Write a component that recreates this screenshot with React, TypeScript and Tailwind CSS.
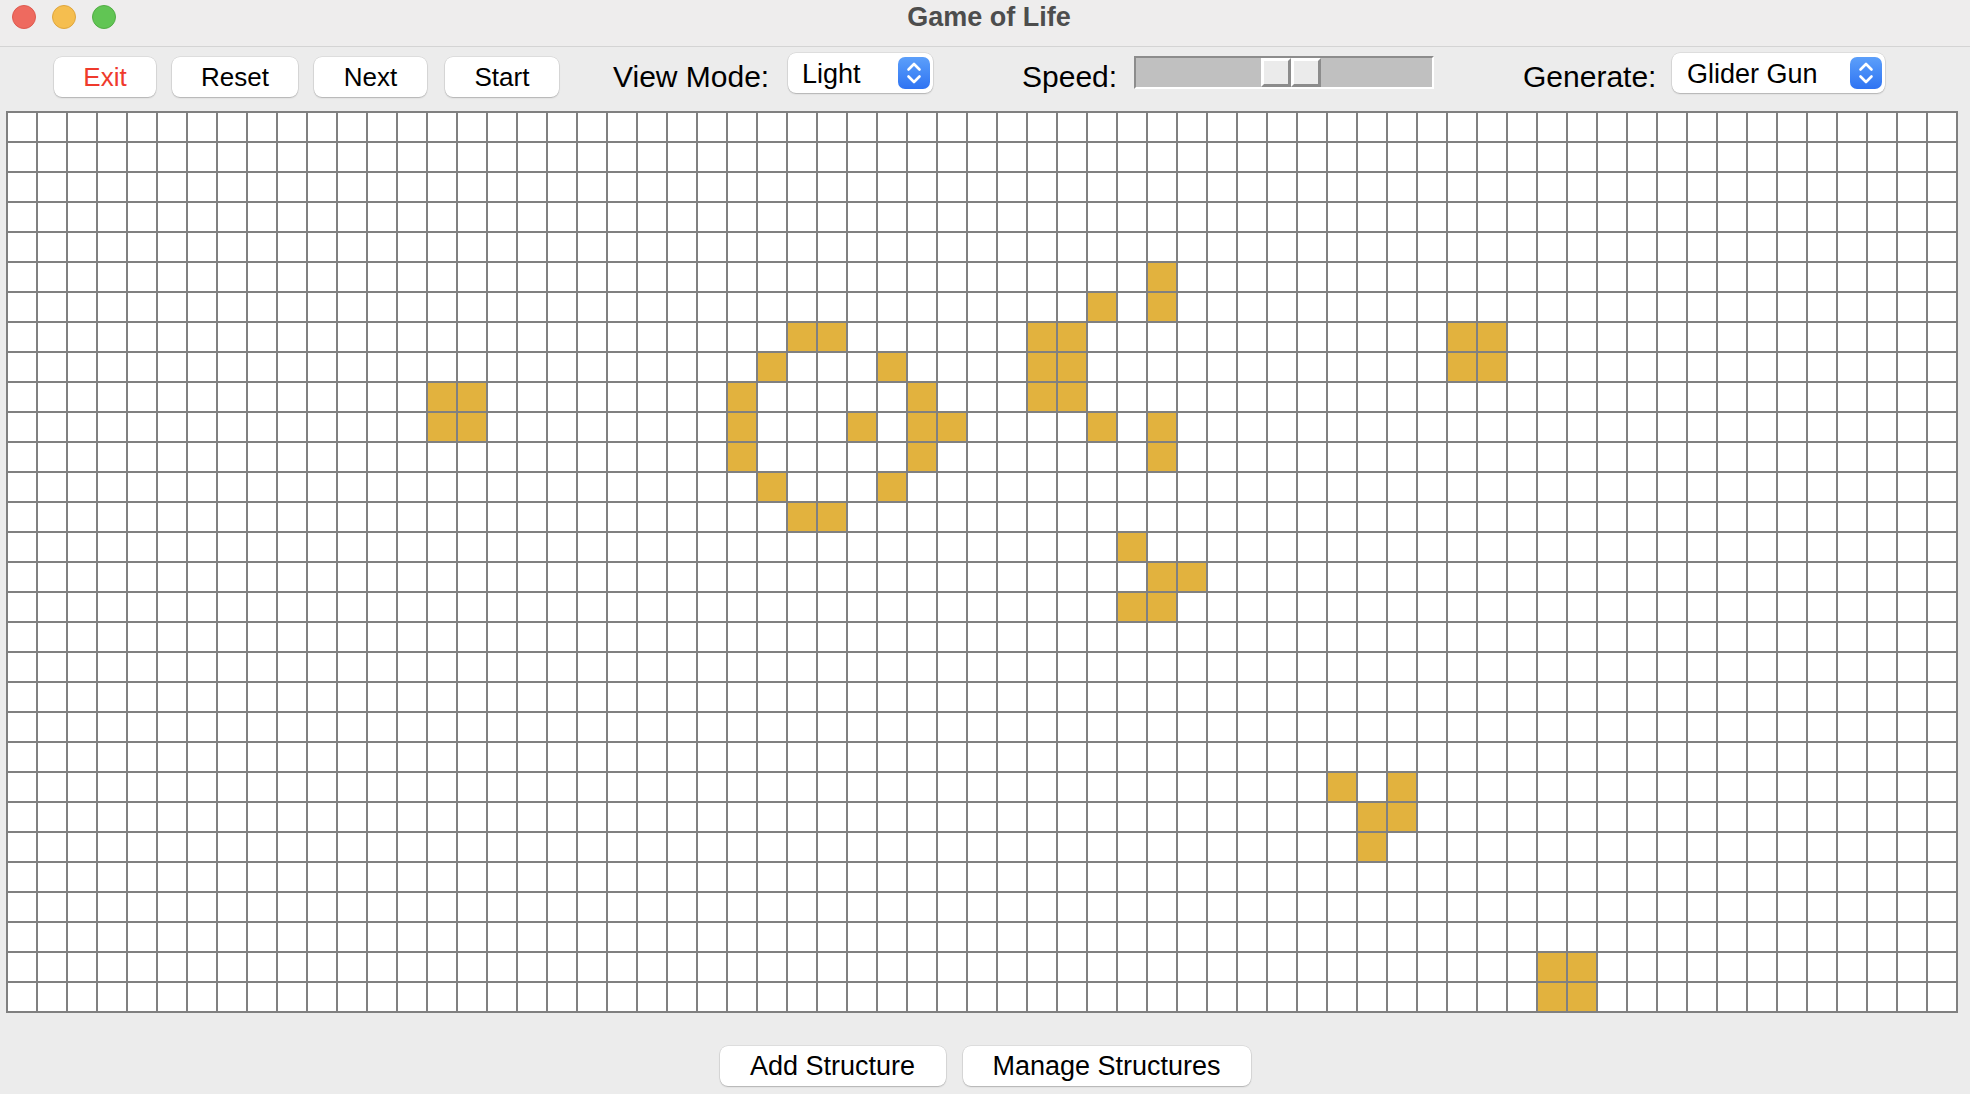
import React from "react";

const COLS = 65;
const ROWS = 30;

const LIVE: Record<number, number[]> = {
  5: [38],
  6: [36, 38],
  7: [26, 27, 34, 35, 48, 49],
  8: [25, 29, 34, 35, 48, 49],
  9: [14, 15, 24, 30, 34, 35],
  10: [14, 15, 24, 28, 30, 31, 36, 38],
  11: [24, 30, 38],
  12: [25, 29],
  13: [26, 27],
  14: [37],
  15: [38, 39],
  16: [37, 38],
  22: [44, 46],
  23: [45, 46],
  24: [45],
  28: [51, 52],
  29: [51, 52],
};

const FONT = { fontFamily: '"Liberation Sans", Arial, Helvetica, sans-serif' };

function MacButton({ label, className, red }: { label: string; className: string; red?: boolean }) {
  return (
    <div
      className={
        "flex h-[40px] items-center justify-center rounded-[8px] bg-white text-[26px] leading-none shadow-[0_0_0_0.5px_rgba(0,0,0,0.12),0_1px_1.5px_rgba(0,0,0,0.2)] " +
        (red ? "text-[#ef3a2c] " : "text-black ") +
        className
      }
    >
      {label}
    </div>
  );
}

function Stepper() {
  return (
    <div className="flex h-[32px] w-[32px] items-center justify-center rounded-[7px] bg-gradient-to-b from-[#5c9ffa] to-[#2f73f2]">
      <svg width="32" height="32" viewBox="0 0 32 32" fill="none">
        <polyline points="10.5,12.5 16,7 21.5,12.5" stroke="white" strokeWidth="2.6" strokeLinecap="round" strokeLinejoin="round" />
        <polyline points="10.5,19.5 16,25 21.5,19.5" stroke="white" strokeWidth="2.6" strokeLinecap="round" strokeLinejoin="round" />
      </svg>
    </div>
  );
}

function Select({ value, className, pl }: { value: string; className: string; pl: string }) {
  return (
    <div
      className={
        "mt-[-4px] flex h-[40px] items-center justify-between rounded-[8px] bg-white pr-[3px] shadow-[0_0_0_0.5px_rgba(0,0,0,0.12),0_1px_1.5px_rgba(0,0,0,0.2)] " +
        pl +
        " " +
        className
      }
    >
      <span className="pt-[3px] text-[27px] leading-none text-black">{value}</span>
      <Stepper />
    </div>
  );
}

function ThumbHalf() {
  return (
    <div className="h-[29px] w-[30px] border-t-[3px] border-l-[3px] border-b-[3px] border-r-[3px] border-t-white border-l-white border-b-[#8c8c8c] border-r-[#8c8c8c] bg-[#ebebeb]" />
  );
}

export default function App() {
  const cells: React.ReactNode[] = [];
  for (let r = 0; r < ROWS; r++) {
    const live = LIVE[r] || [];
    for (let c = 0; c < COLS; c++) {
      const on = live.includes(c);
      cells.push(
        <div key={r * COLS + c} className={on ? "h-[28px] w-[28px] bg-[#e2b23e]" : "h-[28px] w-[28px] bg-white"} />
      );
    }
  }

  return (
    <div className="h-[1094px] w-[1970px] overflow-hidden bg-[#ececec]" style={FONT}>
      {/* Title bar */}
      <div className="relative h-[47px] border-b border-[#d4d4d4] bg-[#eeeded]">
        <div className="flex h-[33px] items-center gap-[16px] pl-[12px]">
          <div className="h-[24px] w-[24px] rounded-full border border-[#de5a4f] bg-[#ee6a5f]" />
          <div className="h-[24px] w-[24px] rounded-full border border-[#dfa63d] bg-[#f5be4f]" />
          <div className="h-[24px] w-[24px] rounded-full border border-[#52ad45] bg-[#61c554]" />
        </div>
        <div className="absolute left-0 right-0 top-0 flex h-[34px] items-center justify-center pl-[8px] text-[27px] font-bold text-[#4d4d4d]">
          Game of Life
        </div>
      </div>

      {/* Toolbar */}
      <div className="flex h-[64px] items-start pl-[54px] pt-[10px]">
        <MacButton label="Exit" red className="w-[102px]" />
        <MacButton label="Reset" className="ml-[16px] w-[126px]" />
        <MacButton label="Next" className="ml-[16px] w-[113px]" />
        <MacButton label="Start" className="ml-[18px] w-[114px]" />

        <div className="ml-[54px] flex h-[40px] w-[175px] items-center text-[30px] leading-none text-black">View Mode:</div>
        <Select value="Light" className="w-[145px]" pl="pl-[14px]" />

        <div className="ml-[89px] flex h-[40px] w-[112px] items-center text-[30px] leading-none text-black">Speed:</div>
        <div className="mt-[-1px] flex h-[33px] w-[300px] border-2 border-t-[#8c8c8c] border-l-[#8c8c8c] border-b-white border-r-white bg-[#c0c0c0] pl-[125px]">
          <ThumbHalf />
          <ThumbHalf />
        </div>

        <div className="ml-[89px] flex h-[40px] w-[149px] items-center text-[30px] leading-none text-black">Generate:</div>
        <Select value="Glider Gun" className="w-[213px]" pl="pl-[15px]" />
      </div>

      {/* Grid */}
      <div className="ml-[6px] grid w-fit grid-cols-[repeat(65,28px)] gap-[2px] bg-[#808080] p-[2px]">
        {cells}
      </div>

      {/* Bottom buttons */}
      <div className="flex justify-center gap-[17px] pt-[33px]">
        <MacButton label="Add Structure" className="w-[226px] !text-[27px]" />
        <MacButton label="Manage Structures" className="w-[288px] !text-[27px]" />
      </div>
    </div>
  );
}
